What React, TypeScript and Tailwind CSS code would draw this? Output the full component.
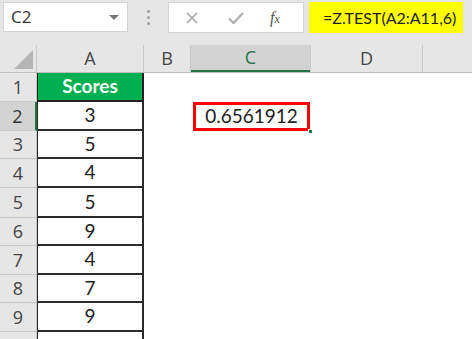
import React from 'react';

const rowHeights = [29, 29, 28, 29, 30, 28, 29, 28, 29];
const scores = ['Scores', '3', '5', '4', '5', '9', '4', '7', '9'];

export default function App() {
  return (
    <div className="w-[472px] h-[339px] overflow-hidden bg-white font-['Open_Sans',sans-serif] text-[#333]">
      {/* formula bar */}
      <div className="h-[45px] bg-[#e6e6e6] flex items-start pt-[2px]">
        <div className="ml-[3px] w-[125px] h-[30px] bg-white border border-[#d4d4d4] flex items-center justify-between pl-[7px] pr-[8px]">
          <span className="text-[17px] text-[#333]">C2</span>
          <span className="w-0 h-0 border-l-[5px] border-r-[5px] border-t-[5px] border-l-transparent border-r-transparent border-t-[#777]"></span>
        </div>
        <div className="w-[40px] h-[30px] flex flex-col items-center justify-center gap-[3px]">
          <span className="w-[3px] h-[3px] rounded-full bg-[#a0a0a0]"></span>
          <span className="w-[3px] h-[3px] rounded-full bg-[#a0a0a0]"></span>
          <span className="w-[3px] h-[3px] rounded-full bg-[#a0a0a0]"></span>
        </div>
        <div className="w-[136px] h-[31px] bg-white border border-[#d4d4d4] flex items-center">
          <svg className="ml-[17px]" width="12" height="12" viewBox="0 0 12 12">
            <path d="M1 1L11 11M11 1L1 11" stroke="#a8a8a8" strokeWidth="1.6" />
          </svg>
          <svg className="ml-[30px]" width="16" height="12" viewBox="0 0 16 12">
            <path d="M1 6.5L5.5 11L15 1" stroke="#b0b0b0" strokeWidth="2.4" fill="none" />
          </svg>
          <span className="ml-[26px] font-['Liberation_Serif',serif] italic text-[16px] text-[#555]">
            f<span className="text-[12px]">x</span>
          </span>
        </div>
        <div className="ml-[5px] w-[154px] h-[31px] bg-[#ffff00] flex items-center pl-[14px]">
          <span className="font-['Lato',sans-serif] text-[16px] text-[#222] whitespace-nowrap">=Z.TEST(A2:A11,6)</span>
        </div>
      </div>

      {/* column headers */}
      <div className="flex h-[28px] bg-[#e6e6e6] border-b border-[#bdbdbd]">
        <div className="w-[37px] border-r border-[#c8c8c8] flex items-end justify-end pr-[3px] pb-[3px]">
          <span className="w-0 h-0 border-b-[19px] border-l-[19px] border-b-[#b5b5b5] border-l-transparent"></span>
        </div>
        <div className="w-[107px] border-r border-[#c8c8c8] flex items-center justify-center text-[18px] text-[#444]">A</div>
        <div className="w-[47px] border-r border-[#c8c8c8] flex items-center justify-center text-[18px] text-[#444]">B</div>
        <div className="w-[119px] bg-[#d3d3d3] border-b-2 border-[#217346] flex items-center justify-center text-[18px] text-[#217346]">C</div>
        <div className="w-[113px] border-l border-r border-[#c8c8c8] flex items-center justify-center text-[18px] text-[#444]">D</div>
        <div className="flex-1"></div>
      </div>

      {/* grid */}
      {rowHeights.map((h, i) => (
        <div key={i} className="flex" style={{ height: h }}>
          <div
            className={
              i === 1
                ? 'w-[37px] bg-[#d3d3d3] border-r-2 border-r-[#217346] border-b border-b-[#c8c8c8] flex items-center justify-center text-[18px] text-[#333]'
                : 'w-[37px] bg-[#e6e6e6] border-r border-r-[#c8c8c8] border-b border-b-[#c8c8c8] flex items-center justify-center text-[18px] text-[#444]'
            }
          >
            {i + 1}
          </div>
          <div
            className={
              i === 0
                ? "w-[107px] bg-[#00b050] border-l border-r-2 border-b-2 border-[#222] flex items-center justify-center font-['Lato',sans-serif] font-bold text-[19px] text-white"
                : "w-[107px] bg-white border-l border-r-2 border-b-2 border-[#2a2a2a] flex items-center justify-center font-['Lato',sans-serif] text-[19px] text-[#222]"
            }
          >
            {scores[i]}
          </div>
          <div className="w-[47px]"></div>
          <div className="w-[119px] relative">
            {i === 1 && (
              <>
                <div className="absolute left-[2px] top-0 w-[117px] h-[29px] border-[3px] border-[#ff0000] flex items-center justify-center font-['Lato',sans-serif] text-[19px] text-[#222]">
                  0.6561912
                </div>
                <div className="absolute left-[117px] top-[27px] w-[5px] h-[5px] bg-[#217346] border border-white"></div>
              </>
            )}
          </div>
          <div className="flex-1"></div>
        </div>
      ))}
      <div className="flex h-[10px]">
        <div className="w-[37px] bg-[#e6e6e6] border-r border-[#c8c8c8]"></div>
        <div className="w-[107px] border-l border-r-2 border-[#2a2a2a]"></div>
      </div>
    </div>
  );
}
